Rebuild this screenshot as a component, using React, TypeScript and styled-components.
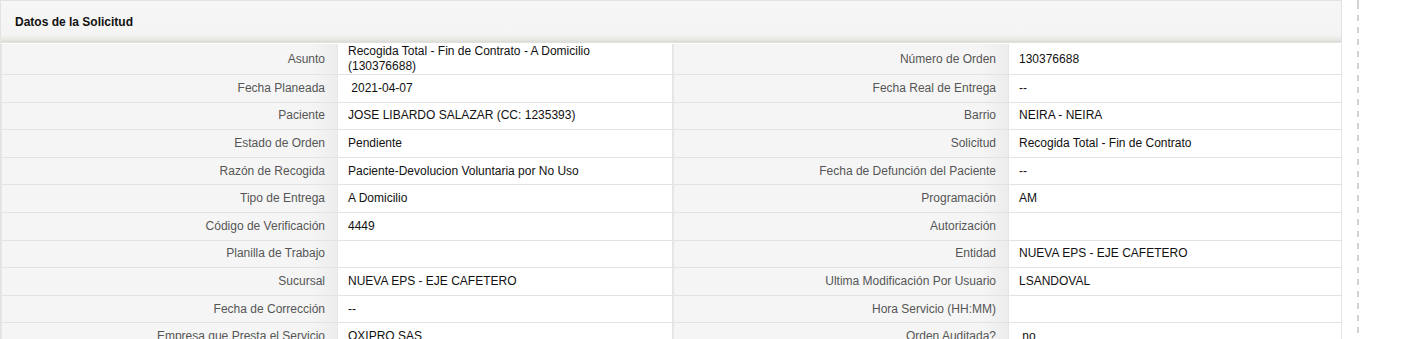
import { styled, createGlobalStyle } from "styled-components";

const GlobalStyle = createGlobalStyle`
    html, body {
        margin: 0;
        padding: 0;
        background: #ffffff;
        overflow: hidden;
    }
    body {
        font-family: "Liberation Sans", Arial, sans-serif;
        font-size: 12px;
        color: #222;
    }
`;

const StyledPage = styled.div`
    display: flex;
    align-items: flex-start;
    height: 339px;
`;

const StyledPanel = styled.section`
    width: 1342px;
    border-left: 1px solid #e2e2e2;
    border-top: 1px solid #e2e2e2;
    box-sizing: border-box;
`;

const StyledHeader = styled.div`
    height: 42px;
    box-sizing: border-box;
    padding: 0 14px;
    display: flex;
    align-items: center;
    font-weight: bold;
    font-size: 12px;
    color: #111;
    background: linear-gradient(to bottom, #f6f6f6 0px, #f4f4f4 34px, #e9e9e6 38px, #dcdcd8 41px, #e4e4e0 42px);
    border-right: 1px solid #e2e2e2;
`;

const StyledGrid = styled.div`
    display: grid;
    grid-template-columns: 336px 336px 335px 334px;
    padding-top: 1px;
`;

const StyledLabel = styled.div<{ $tall?: boolean }>`
    background-color: #f5f5f5;
    background-image: linear-gradient(to right, rgba(0, 0, 0, 0) 92%, rgba(0, 0, 0, 0.035) 100%);
    color: #555;
    text-align: right;
    padding: 0 12px;
    min-height: ${(p) => (p.$tall ? "30px" : "26.6px")};
    display: flex;
    align-items: center;
    justify-content: flex-end;
    border-bottom: 1px solid #e3e3e3;
    border-left: 1px solid #e6e6e6;
    line-height: 15px;
`;

const StyledValue = styled.div<{ $tall?: boolean }>`
    background: #ffffff;
    color: #111;
    padding: 0 12px 0 10px;
    min-height: ${(p) => (p.$tall ? "30px" : "26.6px")};
    display: flex;
    align-items: center;
    border-bottom: 1px solid #e3e3e3;
    border-left: 1px solid #e6e6e6;
    border-right: 1px solid #e6e6e6;
    line-height: 15px;
`;

const StyledDivider = styled.div`
    width: 2px;
    height: 339px;
    margin-left: 15px;
    background: repeating-linear-gradient(to bottom, #d2d2d2 0px, #d2d2d2 6px, transparent 6px, transparent 12px);
    background-position: 0 3px;
`;

type Row = [string, string, string, string];

const rows: Row[] = [
    ["Asunto", "Recogida Total - Fin de Contrato - A Domicilio (130376688)", "Número de Orden", "130376688"],
    ["Fecha Planeada", "\u00a02021-04-07", "Fecha Real de Entrega", "--"],
    ["Paciente", "JOSE LIBARDO SALAZAR (CC: 1235393)", "Barrio", "NEIRA - NEIRA"],
    ["Estado de Orden", "Pendiente", "Solicitud", "Recogida Total - Fin de Contrato"],
    ["Razón de Recogida", "Paciente-Devolucion Voluntaria por No Uso", "Fecha de Defunción del Paciente", "--"],
    ["Tipo de Entrega", "A Domicilio", "Programación", "AM"],
    ["Código de Verificación", "4449", "Autorización", ""],
    ["Planilla de Trabajo", "", "Entidad", "NUEVA EPS - EJE CAFETERO"],
    ["Sucursal", "NUEVA EPS - EJE CAFETERO", "Ultima Modificación Por Usuario", "LSANDOVAL"],
    ["Fecha de Corrección", "--", "Hora Servicio (HH:MM)", ""],
    ["Empresa que Presta el Servicio", "OXIPRO SAS", "Orden Auditada?", "\u00a0no"],
];

export default function App() {
    return (
        <>
            <GlobalStyle />
            <StyledPage>
                <StyledPanel>
                    <StyledHeader>Datos de la Solicitud</StyledHeader>
                    <StyledGrid>
                        {rows.map((r, i) => {
                            const tall = i === 0;
                            return (
                                <>
                                    <StyledLabel key={`a${i}`} $tall={tall}>{r[0]}</StyledLabel>
                                    <StyledValue key={`b${i}`} $tall={tall}>{r[1]}</StyledValue>
                                    <StyledLabel key={`c${i}`} $tall={tall}>{r[2]}</StyledLabel>
                                    <StyledValue key={`d${i}`} $tall={tall}>{r[3]}</StyledValue>
                                </>
                            );
                        })}
                    </StyledGrid>
                </StyledPanel>
                <StyledDivider />
            </StyledPage>
        </>
    );
}
